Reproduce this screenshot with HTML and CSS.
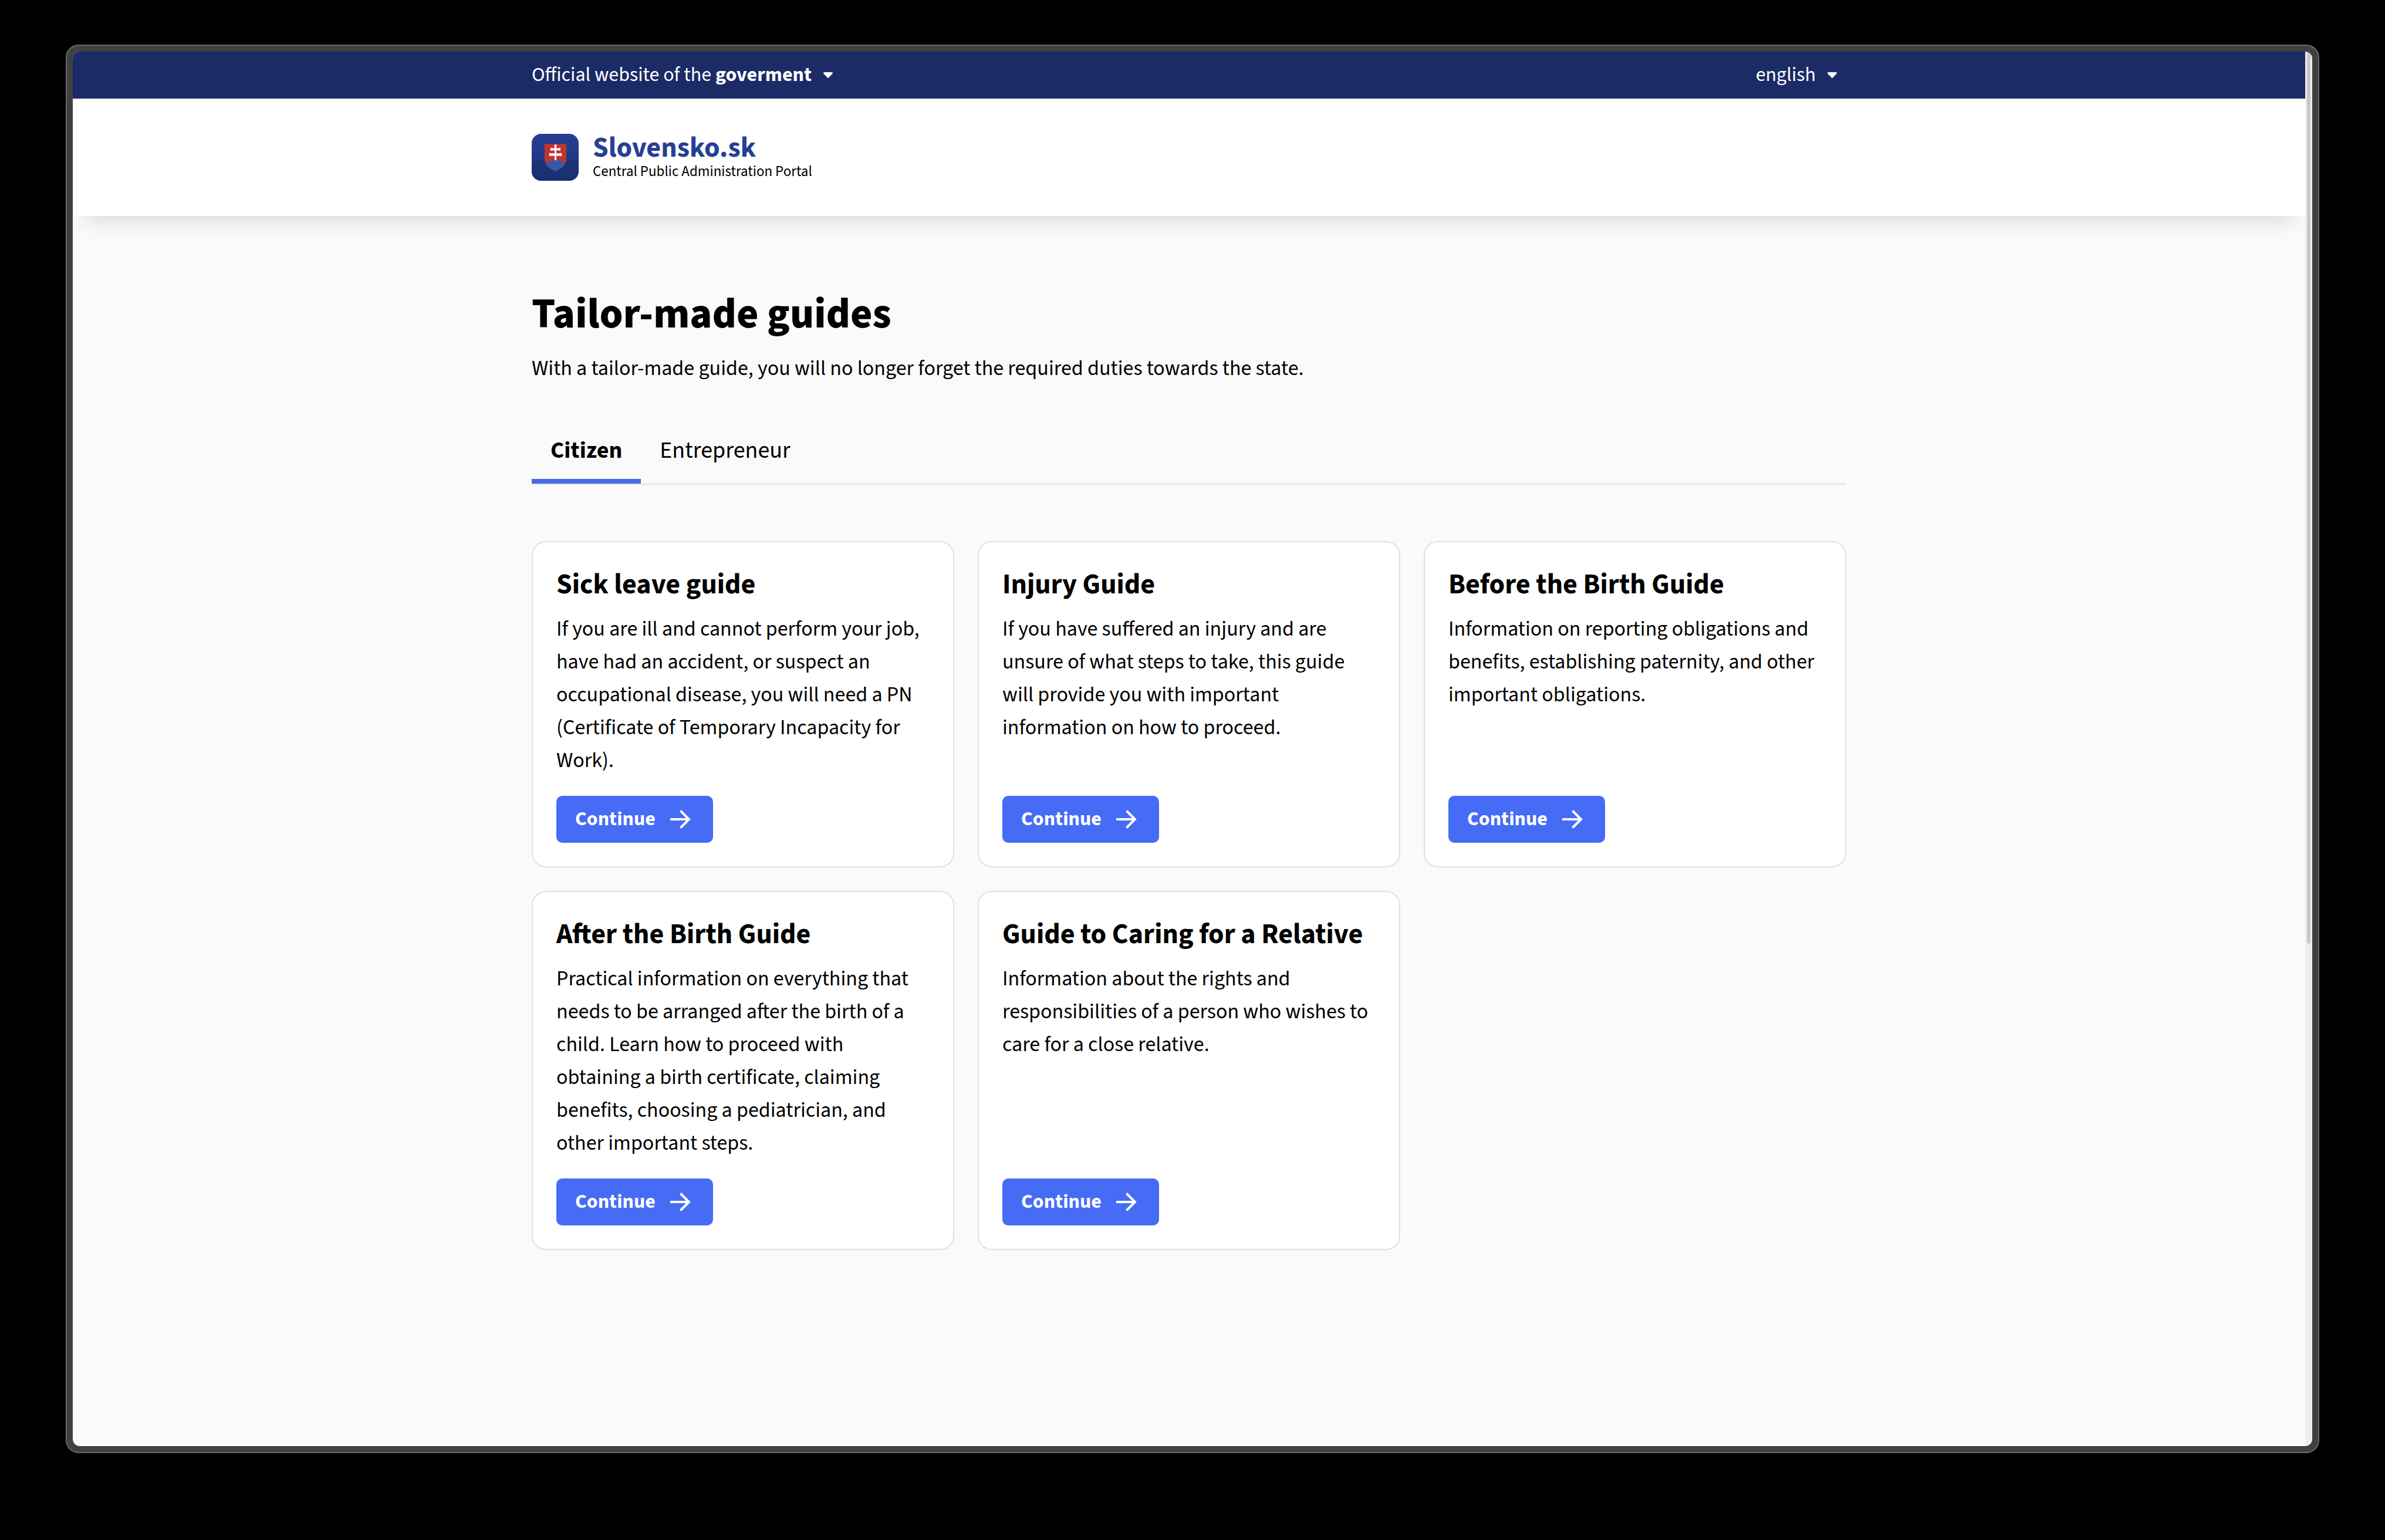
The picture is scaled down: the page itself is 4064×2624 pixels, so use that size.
FILE: index.html
```
<!DOCTYPE html>
<html lang="en">
<head>
<meta charset="utf-8">
<meta name="viewport" content="width=device-width, initial-scale=1">
<title>Tailor-made guides – Slovensko.sk</title>
<link rel="stylesheet" href="styles.css">
</head>
<body>
<svg width="0" height="0" class="sprite" aria-hidden="true">
  <symbol id="caret" viewBox="0 0 16 10"><path d="M1.500 0h13a1.500 1.500 0 0 1 1.100 2.500L9.200 9.300a1.600 1.600 0 0 1-2.400 0L.4 2.500A1.500 1.500 0 0 1 1.500 0z" fill="currentColor"/></symbol>
  <symbol id="arrow" viewBox="0 0 48 48"><path d="M7 24h32M24.500 9.500L39 24 24.500 38.500" fill="none" stroke="currentColor" stroke-width="4"/></symbol>
</svg>
<div class="window">
  <div class="page">
    <div class="topbar">
      <div class="container topbar-inner">
        <button type="button" class="topbar-btn">
          <span>Official website of the <strong>goverment</strong></span>
          <svg class="caret"><use href="#caret"/></svg>
        </button>
        <button type="button" class="topbar-btn">
          <span>english</span>
          <svg class="caret"><use href="#caret"/></svg>
        </button>
      </div>
    </div>
    <header class="header">
      <div class="container">
        <a href="#" class="brand">
          <svg class="brand-logo" viewBox="0 0 80 80" aria-hidden="true">
            <defs><linearGradient id="bg" x1="0" y1="0" x2="0" y2="1"><stop offset="0" stop-color="#253f93"/><stop offset="1" stop-color="#1d3279"/></linearGradient></defs>
            <rect width="80" height="80" rx="16" fill="url(#bg)"/>
            <path d="M0 50c6-6 12-6 18-3 4-8 12-12 22-12s18 4 22 12c6-3 12-3 18 3v14a16 16 0 0 1-16 16H16A16 16 0 0 1 0 64z" fill="#1b2d6c" opacity=".6"/>
            <path d="M22 17h37v26c0 10-7 15.500-18.500 20.500C29 58.500 22 53 22 43z" fill="#bd352f"/>
            <path d="M24 51.500c1-4 5-5.500 9-4 1-2.500 4-4.500 7.500-4.500s6.500 2 7.500 4.500c4-1.500 8 0 9 4-3 5-9 8.700-16.500 12C33 60.200 27 56.500 24 51.500z" fill="#3958a8"/>
            <path d="M38.500 18.500h4l-.5 6c3 0 5 0 7-.8v5.300c-2-.8-4-.8-7-.8v5c4 0 6.500 0 9-.8v5.800c-2.500-.8-5-.8-9-.8V45h-3v-7.600c-4 0-6.500 0-9 .8v-5.800c2.500.8 5 .8 9 .8v-5c-3 0-5 0-7 .8v-5.300c2 .8 4 .8 7 .8z" fill="#fff"/>
          </svg>
          <span class="brand-text">
            <span class="brand-name">Slovensko.sk</span>
            <span class="brand-tagline">Central Public Administration Portal</span>
          </span>
        </a>
      </div>
    </header>
    <main class="container main">
      <h1>Tailor-made guides</h1>
      <p class="lead">With a tailor-made guide, you will no longer forget the required duties towards the state.</p>
      <div class="tabs" role="tablist">
        <button type="button" class="tab tab-active" role="tab" aria-selected="true">Citizen</button>
        <button type="button" class="tab" role="tab" aria-selected="false">Entrepreneur</button>
      </div>
      <div class="cards">
        <article class="card">
          <h2>Sick leave guide</h2>
          <p>If you are ill and cannot perform your job, have had an accident, or suspect an occupational disease, you will need a PN (Certificate of Temporary Incapacity for Work).</p>
          <button type="button" class="btn">Continue<svg class="arrow"><use href="#arrow"/></svg></button>
        </article>
        <article class="card">
          <h2>Injury Guide</h2>
          <p>If you have suffered an injury and are unsure of what steps to take, this guide will provide you with important information on how to proceed.</p>
          <button type="button" class="btn">Continue<svg class="arrow"><use href="#arrow"/></svg></button>
        </article>
        <article class="card">
          <h2>Before the Birth Guide</h2>
          <p>Information on reporting obligations and benefits, establishing paternity, and other important obligations.</p>
          <button type="button" class="btn">Continue<svg class="arrow"><use href="#arrow"/></svg></button>
        </article>
        <article class="card">
          <h2>After the Birth Guide</h2>
          <p>Practical information on everything that needs to be arranged after the birth of a child. Learn how to proceed with obtaining a birth certificate, claiming benefits, choosing a pediatrician, and other important steps.</p>
          <button type="button" class="btn">Continue<svg class="arrow"><use href="#arrow"/></svg></button>
        </article>
        <article class="card">
          <h2>Guide to Caring for a Relative</h2>
          <p>Information about the rights and responsibilities of a person who wishes to care for a close relative.</p>
          <button type="button" class="btn">Continue<svg class="arrow"><use href="#arrow"/></svg></button>
        </article>
      </div>
    </main>
  </div>
  <div class="scrollbar"><div class="scrollbar-thumb"></div></div>
</div>
</body>
</html>
```
FILE: styles.css
```
* { box-sizing: border-box; }

body {
  margin: 0;
  min-height: 100vh;
  display: flex;
  padding: 76px 112px 148px;
  background: #000;
  color: #000;
  font-family: "Source Sans 3", "Noto Sans CJK SC", sans-serif;
  font-size: 36px;
  line-height: 56px;
}

h1, h2, p { margin: 0; }
button { font: inherit; color: inherit; background: none; border: 0; padding: 0; }
.sprite { position: absolute; }

/* Window frame */
.window {
  flex: 1;
  display: flex;
  min-width: 0;
  padding: 10px;
  border: 2px solid #6a6a6a;
  border-radius: 22px;
  background: #404040;
}
.page {
  flex: 1;
  min-width: 0;
  background: #fafafa;
  border-radius: 12px 0 0 12px;
  overflow: hidden;
}
.scrollbar {
  width: 12px;
  padding: 2px 3px;
  background: #eee;
  border-radius: 0 12px 12px 0;
  overflow: hidden;
}
.scrollbar-thumb {
  height: 64%;
  border-radius: 3px;
  background: #c8c8c8;
}

.container {
  max-width: 2240px;
  margin: 0 auto;
}

/* Top bar */
.topbar { background: #1b2b65; color: #fff; }
.topbar-inner {
  display: flex;
  justify-content: space-between;
  align-items: center;
  height: 80px;
  padding-right: 16px;
}
.topbar-btn {
  display: flex;
  align-items: center;
  gap: 20px;
  font-size: 34px;
}
.caret { width: 16px; height: 10px; }

/* Header */
.header {
  padding: 60px 0;
  background: #fff;
  box-shadow: 0 24px 36px -20px rgba(0, 0, 0, .16);
}
.brand {
  display: flex;
  align-items: center;
  gap: 24px;
  color: inherit;
  text-decoration: none;
}
.brand-logo { width: 80px; height: 80px; }
.brand-text { display: flex; flex-direction: column; }
.brand-name {
  font-size: 48px;
  line-height: 48px;
  font-weight: 700;
  color: #263f96;
}
.brand-tagline { font-size: 25px; line-height: 32px; }

/* Main */
.main { padding: 128px 0; }
h1 { font-size: 72px; line-height: 80px; font-weight: 800; }
.lead { margin-top: 24px; }

.tabs {
  display: flex;
  margin-top: 64px;
  border-bottom: 2px solid #e0e0e0;
}
.tab {
  padding: 24px 32px;
  border-bottom: 8px solid transparent;
  font-size: 40px;
  line-height: 48px;
}
.tab-active { border-color: #4a69e8; font-weight: 700; }

.cards {
  display: grid;
  grid-template-columns: repeat(3, 1fr);
  gap: 40px;
  margin-top: 96px;
}
.card {
  display: flex;
  flex-direction: column;
  align-items: flex-start;
  padding: 40px;
  background: #fff;
  border: 2px solid #e0e0e0;
  border-radius: 24px;
}
.card h2 { font-size: 48px; line-height: 64px; font-weight: 700; }
.card p { margin: 16px 0 32px; }
.btn {
  display: flex;
  align-items: center;
  gap: 18px;
  height: 80px;
  margin-top: auto;
  padding: 0 32px;
  border-radius: 10px;
  background: #466cf6;
  color: #fff;
  font-size: 34px;
  font-weight: 700;
}
.arrow { width: 48px; height: 48px; }
```
